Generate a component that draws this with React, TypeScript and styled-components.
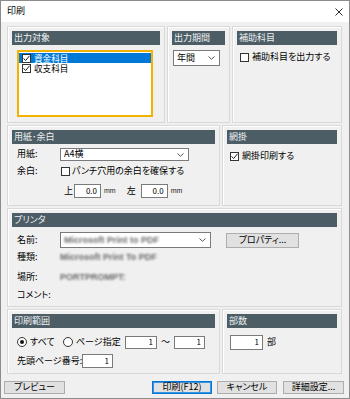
import React from "react";
import styled, { createGlobalStyle } from "styled-components";

const GlobalStyle = createGlobalStyle`
  html, body {
    margin: 0;
    padding: 0;
    background: #fff;
  }
  body {
    font-family: "Noto Sans CJK JP", "Noto Sans", sans-serif;
    font-size: 9px;
    line-height: 1.2;
    font-feature-settings: "palt";
    color: #000;
  }
  * {
    box-sizing: border-box;
  }
`;

const Window = styled.div`
  width: 350px;
  height: 399px;
  border: 1px solid #8c8c8c;
  background: #f0f0f0;
  display: flex;
  flex-direction: column;
`;

const TitleBar = styled.div`
  height: 21px;
  flex-shrink: 0;
  background: #fff;
  display: flex;
  align-items: center;
  justify-content: space-between;
  padding: 0 6px;
`;

const Body = styled.div`
  display: flex;
  flex-direction: column;
  gap: 2px;
  padding: 4px 7px 0 6px;
`;

const Row = styled.div<{ $h: number }>`
  display: flex;
  gap: 2px;
  height: ${(p) => p.$h}px;
`;

const Panel = styled.div<{ $w?: number }>`
  ${(p) => (p.$w ? `width: ${p.$w}px;` : "flex: 1;")}
  flex-shrink: 0;
  display: flex;
  flex-direction: column;
  padding: 4px;
  border: 1px solid #d9d9d9;
  box-shadow: inset 1px 1px 0 #fff;
`;

const SectionHeader = styled.div`
  height: 14px;
  flex-shrink: 0;
  background: #4c5d65;
  color: #eef1f2;
  padding-left: 2px;
  line-height: 14px;
  white-space: nowrap;
  overflow: hidden;
`;

const ListBox = styled.div`
  margin: 5px 7px 0 5px;
  height: 67px;
  border: 2px solid #f2b300;
  background: #fff;
  padding-top: 1px;
`;

const ListItem = styled.div<{ $selected?: boolean }>`
  height: 10px;
  display: flex;
  align-items: center;
  gap: 3px;
  padding-left: 3px;
  overflow: hidden;
  background: ${(p) => (p.$selected ? "#0078d7" : "transparent")};
  color: ${(p) => (p.$selected ? "#fff" : "#000")};
`;

const ItemText = styled.span`
  display: inline-block;
  height: 10px;
  font-size: 8.6px;
  line-height: 10px;
`;

const Box = styled.span`
  width: 9px;
  height: 9px;
  flex-shrink: 0;
  border: 1px solid #333;
  background: #fff;
  display: flex;
  align-items: center;
  justify-content: center;
`;

const Circle = styled.span`
  width: 10px;
  height: 10px;
  flex-shrink: 0;
  border: 1px solid #333;
  border-radius: 50%;
  background: #fff;
  display: flex;
  align-items: center;
  justify-content: center;
`;

const Dot = styled.span`
  width: 4px;
  height: 4px;
  border-radius: 50%;
  background: #111;
`;

const Select = styled.div<{ $w: number; $h: number }>`
  width: ${(p) => p.$w}px;
  height: ${(p) => p.$h}px;
  flex-shrink: 0;
  border: 1px solid #7a7a7a;
  background: #fff;
  display: flex;
  align-items: center;
  justify-content: space-between;
  padding: 0 4px 0 3px;
`;

const CheckRow = styled.div<{ $mt: number }>`
  margin: ${(p) => p.$mt}px 0 0 3px;
  height: 9px;
  display: flex;
  align-items: center;
  gap: 3px;
  white-space: nowrap;
`;

const FieldRow = styled.div<{ $mt: number; $h: number }>`
  margin-top: ${(p) => p.$mt}px;
  height: ${(p) => p.$h}px;
  padding-left: 5px;
  display: flex;
  align-items: center;
  white-space: nowrap;
`;

const FieldLabel = styled.span<{ $w: number }>`
  width: ${(p) => p.$w}px;
  flex-shrink: 0;
`;

const NumBox = styled.div<{ $w: number; $h: number; $ml?: number }>`
  width: ${(p) => p.$w}px;
  height: ${(p) => p.$h}px;
  margin-left: ${(p) => p.$ml ?? 0}px;
  flex-shrink: 0;
  border: 1px solid #7a7a7a;
  background: #fff;
  text-align: right;
  padding-right: 3px;
  font-size: 8px;
  line-height: ${(p) => p.$h - 3}px;
`;

const Text = styled.span<{ $ml?: number; $w?: number }>`
  margin-left: ${(p) => p.$ml ?? 0}px;
  ${(p) => (p.$w ? `width: ${p.$w}px; flex-shrink: 0;` : "")}
`;

const Unit = styled.span<{ $ml: number }>`
  margin-left: ${(p) => p.$ml}px;
  font-family: "Liberation Sans", sans-serif;
  font-size: 7px;
  color: #222;
`;

const Blurred = styled.span`
  color: #6a6a6a;
  font-family: "Liberation Sans", sans-serif;
  font-size: 9px;
  font-weight: bold;
  filter: blur(0.8px);
`;

const RadioOption = styled.span<{ $w: number }>`
  width: ${(p) => p.$w}px;
  flex-shrink: 0;
  display: flex;
  align-items: center;
  gap: 3px;
`;

const Button = styled.div<{ $w: number; $h: number; $default?: boolean }>`
  width: ${(p) => p.$w}px;
  height: ${(p) => p.$h}px;
  flex-shrink: 0;
  background: #e1e1e1;
  border: 1px solid ${(p) => (p.$default ? "#0078d7" : "#adadad")};
  box-shadow: ${(p) => (p.$default ? "inset 0 0 0 1px #3c93dd" : "none")};
  display: flex;
  align-items: center;
  justify-content: center;
  white-space: nowrap;
  font-size: 9px;
`;

const ButtonBar = styled.div`
  margin-top: 7px;
  padding: 0 5px 0 3px;
  display: flex;
  align-items: center;
`;

const Spacer = styled.div`
  flex: 1;
`;

const Check = () => (
  <svg width="7" height="7" viewBox="0 0 7 7">
    <path d="M0.6 3.4 L2.6 5.6 L6.5 0.8" fill="none" stroke="#222" strokeWidth="1" />
  </svg>
);

const Chevron = () => (
  <svg width="7" height="4" viewBox="0 0 7 4">
    <path d="M0.5 0.5 L3.5 3.3 L6.5 0.5" fill="none" stroke="#444" strokeWidth="0.9" />
  </svg>
);

const CheckBox: React.FC<{ checked?: boolean }> = ({ checked }) => <Box>{checked ? <Check /> : null}</Box>;

const Radio: React.FC<{ checked?: boolean }> = ({ checked }) => <Circle>{checked ? <Dot /> : null}</Circle>;

export default function App() {
  return (
    <>
      <GlobalStyle />
      <Window>
        <TitleBar>
          <span>印刷</span>
          <svg width="8" height="8" viewBox="0 0 8 8">
            <path d="M0.5 0.5 L7.5 7.5 M7.5 0.5 L0.5 7.5" stroke="#111" strokeWidth="0.9" />
          </svg>
        </TitleBar>
        <Body>
          <Row $h={97}>
            <Panel $w={158}>
              <SectionHeader>出力対象</SectionHeader>
              <ListBox>
                <ListItem $selected>
                  <CheckBox checked />
                  <ItemText>資金科目</ItemText>
                </ListItem>
                <ListItem>
                  <CheckBox checked />
                  <ItemText>収支科目</ItemText>
                </ListItem>
              </ListBox>
            </Panel>
            <Panel $w={63}>
              <SectionHeader>出力期間</SectionHeader>
              <FieldRow $mt={5} $h={16} style={{ paddingLeft: 1 }}>
                <Select $w={47} $h={16}>
                  年間
                  <Chevron />
                </Select>
              </FieldRow>
            </Panel>
            <Panel>
              <SectionHeader>補助科目</SectionHeader>
              <CheckRow $mt={8}>
                <CheckBox />
                補助科目を出力する
              </CheckRow>
            </Panel>
          </Row>

          <Row $h={81}>
            <Panel $w={213}>
              <SectionHeader>用紙･余白</SectionHeader>
              <FieldRow $mt={4} $h={13}>
                <FieldLabel $w={43}>用紙:</FieldLabel>
                <Select $w={129} $h={13}>
                  A4横
                  <Chevron />
                </Select>
              </FieldRow>
              <FieldRow $mt={4} $h={12}>
                <FieldLabel $w={44}>余白:</FieldLabel>
                <CheckBox />
                <Text $ml={2}>パンチ穴用の余白を確保する</Text>
              </FieldRow>
              <FieldRow $mt={7} $h={14}>
                <FieldLabel $w={47} />
                <Text $w={9}>上</Text>
                <NumBox $w={27} $h={14} $ml={1}>
                  0.0
                </NumBox>
                <Unit $ml={3}>mm</Unit>
                <Text $ml={11} $w={12}>
                  左
                </Text>
                <NumBox $w={27} $h={14} $ml={2}>
                  0.0
                </NumBox>
                <Unit $ml={3}>mm</Unit>
              </FieldRow>
            </Panel>
            <Panel>
              <SectionHeader>網掛</SectionHeader>
              <CheckRow $mt={8}>
                <CheckBox checked />
                網掛印刷する
              </CheckRow>
            </Panel>
          </Row>

          <Row $h={99}>
            <Panel>
              <SectionHeader>プリンタ</SectionHeader>
              <FieldRow $mt={5} $h={16}>
                <FieldLabel $w={43}>名前:</FieldLabel>
                <Select $w={151} $h={16}>
                  <Blurred>Microsoft Print to PDF</Blurred>
                  <Chevron />
                </Select>
                <Button $w={73} $h={15} style={{ marginLeft: 15 }}>
                  プロパティ...
                </Button>
              </FieldRow>
              <FieldRow $mt={3} $h={12}>
                <FieldLabel $w={43}>種類:</FieldLabel>
                <Blurred>Microsoft Print To PDF</Blurred>
              </FieldRow>
              <FieldRow $mt={8} $h={12}>
                <FieldLabel $w={43}>場所:</FieldLabel>
                <Blurred>PORTPROMPT:</Blurred>
              </FieldRow>
              <FieldRow $mt={6} $h={12}>
                <FieldLabel $w={43}>コメント:</FieldLabel>
              </FieldRow>
            </Panel>
          </Row>

          <Row $h={65}>
            <Panel $w={213}>
              <SectionHeader>印刷範囲</SectionHeader>
              <FieldRow $mt={8} $h={13}>
                <RadioOption $w={46}>
                  <Radio checked />
                  すべて
                </RadioOption>
                <RadioOption $w={62}>
                  <Radio />
                  ページ指定
                </RadioOption>
                <NumBox $w={32} $h={13}>
                  1
                </NumBox>
                <Text $w={17} style={{ textAlign: "center" }}>
                  ～
                </Text>
                <NumBox $w={31} $h={13}>
                  1
                </NumBox>
              </FieldRow>
              <FieldRow $mt={5} $h={14}>
                <FieldLabel $w={65}>先頭ページ番号:</FieldLabel>
                <NumBox $w={31} $h={14}>
                  1
                </NumBox>
              </FieldRow>
            </Panel>
            <Panel>
              <SectionHeader>部数</SectionHeader>
              <FieldRow $mt={7} $h={15} style={{ paddingLeft: 3 }}>
                <NumBox $w={33} $h={15}>
                  1
                </NumBox>
                <Text $ml={4}>部</Text>
              </FieldRow>
            </Panel>
          </Row>
        </Body>
        <ButtonBar>
          <Button $w={61} $h={13}>
            プレビュー
          </Button>
          <Spacer />
          <Button $w={60} $h={13} $default>
            印刷(F12)
          </Button>
          <Button $w={60} $h={13} style={{ marginLeft: 5 }}>
            キャンセル
          </Button>
          <Button $w={61} $h={13} style={{ marginLeft: 6 }}>
            詳細設定...
          </Button>
        </ButtonBar>
      </Window>
    </>
  );
}
